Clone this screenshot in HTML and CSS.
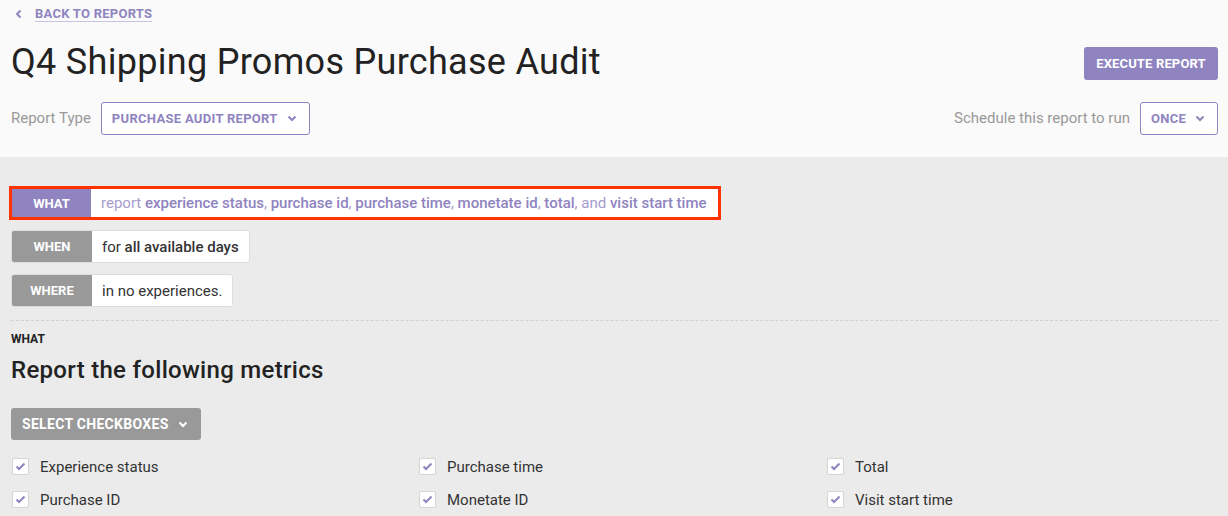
FILE: index.html
```html
<!DOCTYPE html>
<html>
<head>
<meta charset="utf-8">
<link rel="stylesheet" href="styles.css">
</head>
<body>
<header class="top">
  <a class="back" href="#"><svg class="back-ico" width="8" height="10" viewBox="0 0 8 10"><path d="M5.5 1.5 L2 5 L5.5 8.5" fill="none" stroke="#8f84bf" stroke-width="2"/></svg><span class="back-txt">BACK TO REPORTS</span></a>
  <div class="title-row">
    <h1 class="title">Q4 Shipping Promos Purchase Audit</h1>
    <button class="exec">EXECUTE REPORT</button>
  </div>
  <div class="opts-row">
    <div class="opt">
      <span class="opt-label">Report Type</span>
      <span class="dd dd-type">PURCHASE AUDIT REPORT <svg class="chev" width="10" height="7" viewBox="0 0 10 7"><path d="M1.5 1.5 L5 5 L8.5 1.5" fill="none" stroke="#8f84bf" stroke-width="2"/></svg></span>
    </div>
    <div class="opt">
      <span class="opt-label">Schedule this report to run</span>
      <span class="dd dd-once">ONCE <svg class="chev" width="10" height="7" viewBox="0 0 10 7"><path d="M1.5 1.5 L5 5 L8.5 1.5" fill="none" stroke="#8f84bf" stroke-width="2"/></svg></span>
    </div>
  </div>
</header>
<main class="body">
  <div class="summary">
    <div class="srow srow-what">
      <span class="tag tag-what">WHAT</span>
      <span class="sval what-val">report <b>experience status</b>, <b>purchase id</b>, <b>purchase time</b>, <b>monetate id</b>, <b>total</b>, and <b>visit start time</b></span>
    </div>
    <div class="srow">
      <span class="tag">WHEN</span>
      <span class="sval">for <b>all available days</b></span>
    </div>
    <div class="srow">
      <span class="tag">WHERE</span>
      <span class="sval">in no experiences.</span>
    </div>
  </div>
  <div class="divider"></div>
  <div class="section-kicker">WHAT</div>
  <h2 class="section-title">Report the following metrics</h2>
  <button class="selbtn">SELECT CHECKBOXES <svg class="chev" width="10" height="7" viewBox="0 0 10 7"><path d="M1.5 1.5 L5 5 L8.5 1.5" fill="none" stroke="#ffffff" stroke-width="2"/></svg></button>
  <div class="checks">
    <label class="chk"><span class="box"><svg width="11" height="9" viewBox="0 0 11 9"><path d="M1.5 4.5 L4 7 L9.5 1.5" fill="none" stroke="#8f84bf" stroke-width="2"/></svg></span>Experience status</label>
    <label class="chk"><span class="box"><svg width="11" height="9" viewBox="0 0 11 9"><path d="M1.5 4.5 L4 7 L9.5 1.5" fill="none" stroke="#8f84bf" stroke-width="2"/></svg></span>Purchase time</label>
    <label class="chk"><span class="box"><svg width="11" height="9" viewBox="0 0 11 9"><path d="M1.5 4.5 L4 7 L9.5 1.5" fill="none" stroke="#8f84bf" stroke-width="2"/></svg></span>Total</label>
    <label class="chk"><span class="box"><svg width="11" height="9" viewBox="0 0 11 9"><path d="M1.5 4.5 L4 7 L9.5 1.5" fill="none" stroke="#8f84bf" stroke-width="2"/></svg></span>Purchase ID</label>
    <label class="chk"><span class="box"><svg width="11" height="9" viewBox="0 0 11 9"><path d="M1.5 4.5 L4 7 L9.5 1.5" fill="none" stroke="#8f84bf" stroke-width="2"/></svg></span>Monetate ID</label>
    <label class="chk"><span class="box"><svg width="11" height="9" viewBox="0 0 11 9"><path d="M1.5 4.5 L4 7 L9.5 1.5" fill="none" stroke="#8f84bf" stroke-width="2"/></svg></span>Visit start time</label>
  </div>
</main>
</body>
</html>
```
FILE: styles.css
```css
* { box-sizing: border-box; }
html, body { margin: 0; padding: 0; }
body {
  font-family: Roboto, "Liberation Sans", Arial, sans-serif;
  background: #ebebeb;
  color: #333;
  width: 1228px;
  height: 516px;
  overflow: hidden;
}
.top {
  background: #fafafa;
  height: 157px;
  padding: 4px 10px 0 11px;
}
.back {
  display: inline-flex;
  align-items: center;
  gap: 12px;
  margin-left: 4px;
  text-decoration: none;
  height: 16px;
}
.back-ico { display: block; }
.back-txt {
  font-size: 13px;
  font-weight: 700;
  color: #8f84bf;
  letter-spacing: 0.25px;
  border-bottom: 1px solid #c9c2e0;
  line-height: 15px;
}
.title-row {
  display: flex;
  justify-content: space-between;
  align-items: flex-start;
  margin-top: 17px;
}
.title {
  margin: 0;
  font-size: 36px;
  font-weight: 400;
  color: #222;
  line-height: 44px;
  letter-spacing: 0.3px;
}
.exec {
  margin-top: 7px;
  width: 134px;
  height: 33px;
  border: none;
  border-radius: 3px;
  background: #8f84bf;
  color: #fff;
  font-family: inherit;
  font-size: 13px;
  font-weight: 700;
  letter-spacing: 0.15px;
  padding: 0;
}
.opts-row {
  display: flex;
  justify-content: space-between;
  margin-top: 18px;
}
.opt {
  display: flex;
  align-items: center;
  gap: 10px;
}
.opt-label {
  font-size: 15px;
  color: #999;
  position: relative;
  top: -1px;
}
.dd {
  display: inline-flex;
  align-items: center;
  height: 33px;
  border: 1px solid #8f84bf;
  border-radius: 3px;
  background: #fff;
  color: #8f84bf;
  font-size: 13px;
  font-weight: 700;
  letter-spacing: 0.3px;
  gap: 9px;
}
.dd-type { width: 209px; padding-left: 10px; }
.dd-once { width: 78px; padding-left: 10px; }
.chev { display: block; }

.body {
  padding: 28px 10px 0 11px;
}
.summary {
  display: flex;
  flex-direction: column;
  align-items: flex-start;
  gap: 11px;
}
.srow {
  display: flex;
  height: 33px;
  border-radius: 3px;
  overflow: hidden;
  border: 1px solid #ddd;
}
.srow-what {
  border: 3px solid #ff3300;
  border-radius: 0;
  margin-left: -2px;
  height: 34px;
  margin-top: 1px;
  margin-bottom: -1px;
}
.tag {
  width: 80px;
  background: #999;
  color: #fff;
  font-size: 13px;
  font-weight: 700;
  display: flex;
  align-items: center;
  justify-content: center;
}
.tag-what {
  background: #8f84bf;
  width: 79px;
}
.sval {
  background: #fff;
  display: flex;
  align-items: center;
  padding: 0 10px;
  font-size: 15px;
  color: #333;
  white-space: pre;
}
.sval b { font-weight: 500; }
.what-val {
  color: #a69dcc;
  padding-right: 11px;
}
.what-val b { color: #8f84bf; }

.divider {
  margin-top: 13px;
  border-top: 1px dashed #d0d0d0;
}
.section-kicker {
  margin-top: 11px;
  font-size: 12px;
  font-weight: 700;
  color: #222;
  line-height: 14px;
}
.section-title {
  margin: 9px 0 0;
  font-size: 24px;
  font-weight: 500;
  color: #222;
  line-height: 30px;
  letter-spacing: 0.3px;
}
.selbtn {
  margin-top: 23px;
  display: inline-flex;
  align-items: center;
  gap: 9px;
  height: 32px;
  width: 190px;
  padding: 0 0 0 11px;
  border: none;
  border-radius: 3px;
  background: #999;
  color: #fff;
  font-family: inherit;
  font-size: 14px;
  font-weight: 700;
  letter-spacing: 0.3px;
}
.checks {
  display: grid;
  grid-template-columns: 407px 408px auto;
  row-gap: 16px;
  margin-top: 18px;
  margin-left: 1px;
}
.chk {
  display: flex;
  align-items: center;
  gap: 11px;
  font-size: 15px;
  color: #333;
  height: 17px;
}
.box {
  width: 17px;
  height: 17px;
  background: #fff;
  border: 1px solid #d5d5d5;
  border-radius: 2px;
  display: flex;
  align-items: center;
  justify-content: center;
}
.box svg { display: block; }
```
